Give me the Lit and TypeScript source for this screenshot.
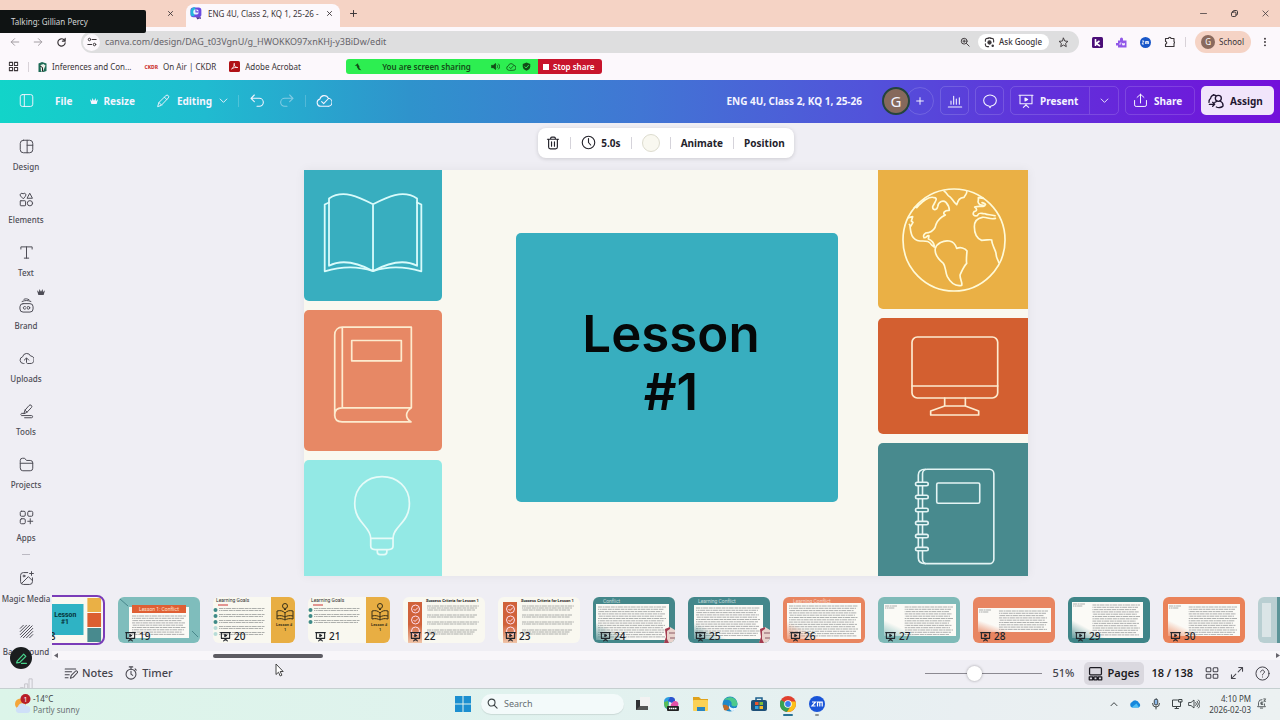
import { LitElement, html, svg, css } from "lit";
import { customElement } from "lit/decorators.js";

const icon = (size: number, body: unknown, weight = 1.6) => html`<svg
  width=${size} height=${size} viewBox="0 0 24 24" fill="none" stroke="currentColor"
  stroke-width=${weight} stroke-linecap="round" stroke-linejoin="round" aria-hidden="true"
>${body}</svg>`;

const g = {
  close: svg`<path d="M5 5l14 14M19 5L5 19"/>`,
  plus: svg`<path d="M12 4v16M4 12h16"/>`,
  minus: svg`<path d="M4 12h16"/>`,
  restore: svg`<rect x="4" y="8" width="12" height="12" rx="3"/><path d="M8 8V7a3 3 0 0 1 3-3h6a3 3 0 0 1 3 3v6a3 3 0 0 1-3 3h-1"/>`,
  back: svg`<path d="M21 12H3M11 4l-8 8 8 8"/>`,
  forward: svg`<path d="M3 12h18M13 4l8 8-8 8"/>`,
  reload: svg`<path d="M20 13a8 8 0 1 1-2.5-7L20 8.500M20 3v6h-6"/>`,
  tune: svg`<circle cx="6" cy="6" r="3"/><path d="M13 6h9M2 18h9"/><circle cx="18" cy="18" r="3"/>`,
  zoomIn: svg`<circle cx="10" cy="10" r="7"/><path d="M15.500 15.500L22 22M10 7v6M7 10h6"/>`,
  lens: svg`<path d="M3 9V7a4 4 0 0 1 4-4h2M15 3h2a4 4 0 0 1 4 4v4M3 15v2a4 4 0 0 0 4 4h3"/><circle cx="12" cy="12" r="3.500" fill="currentColor"/><circle cx="19" cy="19" r="1.500" fill="currentColor"/><path d="M9 3l1-1h4l1 1"/>`,
  star: svg`<path d="M12 2.500l2.900 6.300 6.800.7-5.100 4.600 1.500 6.900L12 17.500 5.900 21l1.500-6.900-5.100-4.600 6.800-.7z"/>`,
  puzzle: svg`<path d="M3 5h6a2.500 2.500 0 0 1 5 0h6v6a2.500 2.500 0 0 1 0 4v6H3v-5a2.500 2.500 0 0 0 0-5z"/>`,
  dots: svg`<g fill="currentColor" stroke="none"><circle cx="12" cy="4" r="2.300"/><circle cx="12" cy="12" r="2.300"/><circle cx="12" cy="20" r="2.300"/></g>`,
  apps4: svg`<rect x="3" y="3" width="7" height="7"/><rect x="14" y="3" width="7" height="7"/><rect x="3" y="14" width="7" height="7"/><rect x="14" y="14" width="7" height="7"/>`,
  panel: svg`<rect x="2" y="2.500" width="20" height="19" rx="3.500"/><path d="M8.500 2.500v19"/>`,
  crown: svg`<path fill="currentColor" stroke="none" d="M0 7L6 12L7 3L12 11L17 3L18 12L24 7L20 21H4Z"/>`,
  pencil: svg`<path d="M3 21l2-6.500L17 2.800a2.800 2.800 0 0 1 4 4L9.500 19zM14.500 5.500l4 4M5 14.500l4.500 4.500"/>`,
  chevron: svg`<path d="M3 8l9 9 9-9"/>`,
  chevronUp: svg`<path d="M3 17l9-9 9 9"/>`,
  undo: svg`<path d="M8 3L3 8l5 5M3 8h12.500a6 6 0 0 1 0 12H12"/>`,
  redo: svg`<path d="M16 3l5 5-5 5M21 8H8.500a6 6 0 0 0 0 12H12"/>`,
  cloudCheck: svg`<path d="M7 20a5.500 5.500 0 0 1-1.200-10.800A6.700 6.700 0 0 1 18.500 8 6 6 0 0 1 17.500 20zM8.500 13l3 3L18 9"/>`,
  chart: svg`<path d="M2 21h20M6 17v-5M10 17V5M14 17V9M18.500 17V7"/>`,
  comment: svg`<path d="M12 3c5.500 0 9.500 3.800 9.500 8.300S17.500 19.500 13.500 19.500L12 22l-1.500-2.500C6.500 19.500 2.500 15.800 2.500 11.300S6.500 3 12 3z"/>`,
  present: svg`<path d="M1.500 3.500h21M3 3.500v12.500h18V3.500M12 16v2M12 18l-4 3.500M12 18l4 3.500"/><path fill="currentColor" d="M10.500 7.500v4.500l4-2.200z"/>`,
  share: svg`<path d="M2.500 12v7a2.500 2.500 0 0 0 2.500 2.500h14a2.500 2.500 0 0 0 2.500-2.500v-7M12 16V2M6.500 7L12 2l5.500 5"/>`,
  assign: svg`<path d="M11 3.500A5 5 0 0 0 4 8a7 7 0 0 0-2.500 6M8 2.500L12 4M2 17h8M7 14l3 3-3 3"/><circle cx="15.500" cy="8" r="4.500"/><path d="M13 12c-1 2-2 2-3 2M18 12c3 1.500 5 4 4.500 7.500-2 2.500-7 3-10 1.500"/>`,
  trash: svg`<path d="M2.500 5.500h19M8 5.500V4a2 2 0 0 1 2-2h4a2 2 0 0 1 2 2v1.500M4.500 5.500V19a3 3 0 0 0 3 3h9a3 3 0 0 0 3-3V5.500M9.500 10v7.500M14.500 10v7.500"/>`,
  clock: svg`<circle cx="12" cy="12" r="10"/><path d="M12 5.500V12l3.500 4"/>`,
  design: svg`<rect x="2" y="2" width="20" height="20" rx="5"/><path d="M13 2v20M13 10h9"/>`,
  elements: svg`<path d="M6.500 10.500L2.500 6.500a2.400 2.400 0 0 1 4-3.500 2.400 2.400 0 0 1 4 3.500zM17.500 2.500l4 7.500h-8z"/><rect x="2" y="14" width="8.500" height="8" rx="1"/><circle cx="17.500" cy="18" r="4.200"/>`,
  text: svg`<path d="M3 6.500V3h18v3.500M12 3v18M8.500 21h7"/>`,
  brand: svg`<rect x="1.500" y="9" width="21" height="13.500" rx="5"/><path d="M5 5.500c5-2 9-2 14 0M8 2c3-1.300 5-.8 8 .8"/><path d="M10.500 14a2.200 2.200 0 1 0 0 3.500"/><circle cx="15" cy="15.700" r="2.200"/>`,
  upload: svg`<path d="M8 20H7A5.500 5.500 0 0 1 5.800 9.200 6.700 6.700 0 0 1 18.500 8 6 6 0 0 1 17.500 20H14c-1.500 0-2-1-2-2v-6M8.500 14.500L12 11l3.500 3.500"/>`,
  tools: svg`<path d="M8 15l1.500-5L16 2.500a2.500 2.500 0 0 1 4 3L13 13zM9.500 10l3.500 3"/><path d="M8 15H4a2 2 0 0 0 0 3.500h16a1.500 1.500 0 0 1 0 3.500H9"/>`,
  folder: svg`<path d="M2 8V5.500A3.500 3.500 0 0 1 5.500 2H9l3 3.500h6A4 4 0 0 1 22 9.500V18a4 4 0 0 1-4 4H6a4 4 0 0 1-4-4zM2 10h20"/>`,
  apps: svg`<rect x="2" y="2" width="8" height="8" rx="2"/><rect x="14" y="2" width="8" height="8" rx="2"/><rect x="2" y="14" width="8" height="8" rx="2"/><path d="M18 14v8M14 18h8"/>`,
  magic: svg`<path d="M14 2.500H7A4.500 4.500 0 0 0 2.500 7v10A4.500 4.500 0 0 0 7 21.500h10a4.500 4.500 0 0 0 4.500-4.500v-6M4 20L15 9l6 6M20 1v6M17 4h6"/><circle cx="8" cy="8" r="1.500"/>`,
  hatch: svg`<path d="M2 7l5-5M2 12L12 2M2 17L17 2M3 21L21 3M7 22L22 7M12 22l10-10M17 22l5-5"/>`,
  bars: svg`<path d="M2 22v-5h5v5M9 22V11h5v11M16 22V3h5v19"/>`,
  notes: svg`<path d="M2 5h18M2 10h11M2 15h7M2 20h5M11 21l1.500-5 7-7a2 2 0 0 1 3 3l-7 7.500z"/>`,
  timer: svg`<circle cx="12" cy="14" r="8.500"/><path d="M9 1.500h6M12 2v3.500M19 5l2 2M12 9v5l3 2"/>`,
  pages: svg`<rect x="2.500" y="2.500" width="19" height="11.500" rx="1.500"/><path d="M2 17.500h5.500V22H2zM9.500 17.500h5V22h-5zM16.500 17.500H22V22h-5.500z"/>`,
  grid: svg`<rect x="2" y="3" width="8" height="7" rx="1.500"/><rect x="14" y="3" width="8" height="7" rx="1.500"/><rect x="2" y="14" width="8" height="7" rx="1.500"/><rect x="14" y="14" width="8" height="7" rx="1.500"/>`,
  expand: svg`<path d="M15 2.500h6.500V9M21 3l-7 7M9 21.500H2.500V15M3 21l7-7"/>`,
  help: svg`<circle cx="12" cy="12" r="10.500"/><path d="M9 9.500a3 3 0 1 1 4.500 2.600c-1 .6-1.500 1.100-1.500 2.200M12 17.500v.2"/>`,
  mic: svg`<rect x="8.500" y="2" width="7" height="12" rx="3.500" fill="#8cb8e8"/><path d="M5 11a7 7 0 0 0 14 0M12 18v4"/>`,
  network: svg`<path d="M13 4H3v13h16v-5M8 21h7M11 17v4"/><path d="M16 3h6v5h-6zM19 8v3"/>`,
  speaker: svg`<path d="M2 9h4l6-5v16l-6-5H2zM15.500 9a4 4 0 0 1 0 6M18.500 6.500a8 8 0 0 1 0 11M21 4a11 11 0 0 1 0 16"/>`,
  loud: svg`<path fill="currentColor" d="M2 9h4l6-5v16l-6-5H2z"/><path d="M16 8a5 5 0 0 1 0 8M20 5a9 9 0 0 1 0 14"/>`,
  bell: svg`<path d="M13 3.500A7 7 0 0 0 5.500 10v6L3.500 19h17l-2-3v-3M9.500 22h5M15 9h-4v5h4M11 11.500h3M17 2h4l-4 5h4"/>`,
  search: svg`<circle cx="10" cy="10" r="7.500"/><path d="M15.500 15.500L22 22"/>`,
};

@customElement("browser-chrome")
class BrowserChrome extends LitElement {
  static styles = css`
    :host { display: block; position: relative; font: 8px/14px "Noto Sans", "Open Sans", sans-serif; color: #3a3538; background: #fcf8fc; }
    svg { display: block; flex: none; }
    button, a { font: inherit; color: inherit; background: none; border: 0; padding: 0; display: flex; align-items: center; text-decoration: none; white-space: nowrap; }
    .tabs { height: 27px; background: #f5d3c5; display: flex; align-items: flex-end; padding: 0 10px 0 0; box-sizing: border-box; }
    .tab { height: 27px; display: flex; align-items: center; box-sizing: border-box; padding: 0 6px 0 10px; gap: 5px; }
    .idle { width: 180px; justify-content: flex-end; }
    .active { height: 23px; width: 154px; margin-left: 6px; padding: 0 7px 4px 4px; background: #fcf8fc; border-radius: 8px 8px 0 0; }
    .title { flex: 1; overflow: hidden; white-space: nowrap; }
    .new { height: 27px; margin-left: 9px; }
    .window { margin-left: auto; display: flex; gap: 22px; height: 27px; align-items: center; }
    .bar { height: 30px; display: flex; align-items: center; padding: 0 10px; }
    .nav { display: flex; gap: 13px; width: 71px; flex: none; align-items: center; }
    .muted { color: #9b969b; }
    .omni { flex: 1; height: 22px; border-radius: 11px; background: #dededf; display: flex; align-items: center; gap: 5px; padding: 0 10px 0 2px; }
    .site { width: 17px; height: 17px; border-radius: 50%; background: #fcf8fc; justify-content: center; }
    .url { flex: 1; min-width: 0; border: 0; background: none; padding: 0; font: 9px/14px "Noto Sans", sans-serif; color: #66646a; outline: 0; }
    .ask { height: 16px; padding: 0 7px 0 6px; gap: 4px; border-radius: 8px; background: #fff; font-weight: 500; margin: 0 4px 0 3px; }
    .ext { display: flex; align-items: center; gap: 13px; padding-left: 13px; }
    .ext .rule { margin: 0 -4px; }
    .school { height: 22px; border-radius: 11px; background: #f5d3c5; padding: 0 7px 0 6px; gap: 4px; margin-right: -4px; }
    .g { width: 14px; height: 14px; border-radius: 50%; background: #8a6a5e; color: #fff; text-align: center; }
    .marks { height: 23px; display: flex; align-items: center; padding: 0 8px 4px; gap: 13px; box-sizing: border-box; }
    .marks .rule { margin: 0 -4px; }
    .marks a { gap: 5px; }
    .rule { width: 1px; height: 10px; background: #d8d2d8; }
    .ckdr { font-size: 5px; font-weight: 800; color: #c33; }
    .talking { position: absolute; left: 0; top: 10px; width: 146px; height: 23px; line-height: 23px; padding-left: 11px; box-sizing: border-box; background: #0f1313; color: #d4d6d6; border-radius: 0 2px 2px 0; }
    .sharing { position: absolute; left: 346px; top: 59px; display: flex; height: 15px; font-weight: 600; }
    .on { width: 192px; box-sizing: border-box; background: #2dee51; color: #124d17; border-radius: 3px 0 0 3px; display: flex; align-items: center; justify-content: space-between; padding: 0 7px 0 8px; }
    .on span { display: flex; gap: 6px; }
    .stop { width: 64px; gap: 4px; padding: 0 5px; background: #c8142c; color: #fff; border-radius: 0 3px 3px 0; }
    .sq { width: 6px; height: 6px; background: #fff; }
  `;
  render() {
    return html`
      <div class="tabs">
        <div class="tab idle"><button aria-label="Close tab">${icon(7, g.close, 3)}</button></div>
        <div class="tab active">
          <svg width="13" height="13" viewBox="0 0 24 24"><rect x="1" y="1" width="20" height="18" rx="5" fill="#6a4be0"/><path d="M1 8a7 7 0 0 1 9-7L8 17H5a4 4 0 0 1-4-4z" fill="#24b5dc"/><path d="M11 19h9v3l-3-1-3 2z" fill="#4a2a90"/><circle cx="11" cy="9" r="5" fill="#eaf4ff"/><path d="M11 4v5h5" fill="none" stroke="#6a4be0" stroke-width="2"/></svg>
          <span class="title">ENG 4U, Class 2, KQ 1, 25-26 -</span>
          <button aria-label="Close tab">${icon(7, g.close, 3)}</button>
        </div>
        <button class="new" aria-label="New tab">${icon(9, g.plus, 2.6)}</button>
        <div class="window">
          <button aria-label="Minimise">${icon(9, g.minus, 2)}</button>
          <button aria-label="Restore">${icon(9, g.restore, 2.6)}</button>
          <button aria-label="Close">${icon(9, g.close, 2)}</button>
        </div>
      </div>
      <div class="bar">
        <div class="nav">
          <button class="muted" aria-label="Back">${icon(10, g.back, 2.2)}</button>
          <button class="muted" aria-label="Forward">${icon(10, g.forward, 2.2)}</button>
          <button aria-label="Reload">${icon(11, g.reload, 2.6)}</button>
        </div>
        <div class="omni">
          <button class="site" aria-label="Site information">${icon(10, g.tune, 2.4)}</button>
          <input class="url" aria-label="Address" value="canva.com/design/DAG_t03VgnU/g_HWOKKO97xnKHj-y3BiDw/edit" />
          <button aria-label="Zoom">${icon(10, g.zoomIn, 2.2)}</button>
          <button class="ask">${icon(11, g.lens, 2.4)}Ask Google</button>
          <button aria-label="Bookmark">${icon(11, g.star, 2)}</button>
        </div>
        <div class="ext">
          <svg width="11" height="11" viewBox="0 0 22 22"><rect width="22" height="22" rx="3" fill="#4b0e78"/><path d="M7 4v14M15 8l-7 5 8 5" stroke="#fff" stroke-width="3.200" fill="none"/></svg>
          <svg width="11" height="11" viewBox="0 0 22 22"><path d="M8 7V4a3 3 0 0 1 6 0v3h7v14H4v-4H0v-5h4V7z" fill="#9158e8"/><path d="M8 16v-4h3M13 12v4h2v-3v3h2v-4" stroke="#fff" stroke-width="1.500" fill="none"/></svg>
          <svg width="11" height="11" viewBox="0 0 22 22"><circle cx="11" cy="11" r="11" fill="#1957c8"/><path d="M4 8h4l-4 6h4M11 14V9h3v5v-5h3v5" stroke="#fff" stroke-width="1.600" fill="none"/></svg>
          <button aria-label="Extensions">${icon(12, g.puzzle, 2.2)}</button>
          <span class="rule"></span>
          <button class="school"><span class="g">G</span>School</button>
          <button aria-label="Menu">${icon(10, g.dots)}</button>
        </div>
      </div>
      <div class="marks">
        <button aria-label="Apps">${icon(11, g.apps4, 2.2)}</button>
        <span class="rule"></span>
        <a href="#"><svg width="9" height="10" viewBox="0 0 18 20"><path d="M1 3l7-3 9 3v15l-6 2H1z" fill="#1d6b56"/><path d="M5 6l6-2 4 3-5 12H6z" fill="#e8f0e8"/><path d="M4 8l5 3v8" stroke="#222" stroke-width="2" fill="none"/></svg>Inferences and Con...</a>
        <a href="#"><span class="ckdr">CKDR</span>On Air | CKDR</a>
        <a href="#"><svg width="11" height="11" viewBox="0 0 22 22"><rect width="22" height="22" rx="3" fill="#b01116"/><path d="M5 16c4-2 6-8 5.500-11.500C9 9 13 14 17.500 13 13 12 8 14 5 16z" stroke="#fff" stroke-width="1.600" fill="none"/></svg>Adobe Acrobat</a>
      </div>
      <div class="sharing">
        <div class="on">
          <svg width="8" height="8" viewBox="0 0 24 24"><path d="M2 8l10-7 1 5 3 3v6l6 7-8-2-5-7-1-5z" fill="#124d17"/></svg>
          You are screen sharing
          <span>${icon(9, g.loud, 2.2)}${icon(10, g.cloudCheck, 2)}<svg width="9" height="9" viewBox="0 0 24 24"><path d="M12 1l10 4v7c0 6-5 9-10 11C7 21 2 18 2 12V5z" fill="#124d17"/><path d="M7 12l4 4 7-8" stroke="#2dee51" stroke-width="2.500" fill="none"/></svg></span>
        </div>
        <button class="stop"><span class="sq"></span>Stop share</button>
      </div>
      <div class="talking">Talking: Gillian Percy</div>
    `;
  }
}

@customElement("editor-header")
class EditorHeader extends LitElement {
  static styles = css`
    :host { display: flex; align-items: center; height: 43px; padding: 0 6px 2px 19px; box-sizing: border-box; color: #f4f4ff; font: 700 10px/16px "Noto Sans", sans-serif;
      background: linear-gradient(90deg, #12d4c9 0%, #20bbd0 16%, #2f93cc 32%, #4176d4 50%, #5252da 68%, #5f34da 80%, #7310da 100%); }
    svg { display: block; flex: none; }
    button { font: inherit; color: inherit; background: none; border: 0; padding: 0; display: flex; align-items: center; white-space: nowrap; }
    .file { margin-left: 21px; }
    .resize { margin-left: 18px; gap: 5px; }
    .mode { margin-left: 21px; gap: 7px; }
    .rule { width: 1px; height: 12px; background: #ffffff33; margin: 0 10px; }
    .undo { margin-right: 14px; }
    .off { opacity: .45; }
    .name { margin-left: auto; }
    .people { display: flex; margin-left: 20px; }
    .me { width: 28px; height: 28px; line-height: 24px; box-sizing: border-box; border: 2px solid #24443c; border-radius: 50%; background: #86695c; text-align: center; font-size: 15px; font-weight: 400; z-index: 1; }
    .add, .square, .box { border: 1px solid #ffffff26; box-sizing: border-box; }
    .add { width: 28px; height: 28px; border-radius: 50%; margin-left: -4px; justify-content: center; }
    .actions { display: flex; gap: 6px; margin-left: 6px; }
    .square { width: 29px; height: 29px; border-radius: 5px; justify-content: center; }
    .box { height: 29px; border-radius: 5px; display: flex; }
    .box button { gap: 6px; box-sizing: border-box; }
    .present { width: 78px; padding-left: 7px; }
    .more { width: 29px; justify-content: center; border-left: 1px solid #ffffff26; }
    .share { width: 68px; padding-left: 7px; }
    .assign { height: 29px; width: 73px; padding-left: 7px; gap: 6px; border-radius: 5px; background: #f1e5fb; color: #1f1630; }
  `;
  render() {
    return html`
      <button aria-label="Toggle panel">${icon(15, g.panel, 1.5)}</button>
      <button class="file">File</button>
      <button class="resize">${icon(8, g.crown)}Resize</button>
      <button class="mode">${icon(14, g.pencil)}Editing ${icon(9, g.chevron, 2.4)}</button>
      <span class="rule"></span>
      <button class="undo" aria-label="Undo">${icon(16, g.undo)}</button>
      <button class="off" aria-label="Redo">${icon(16, g.redo)}</button>
      <span class="rule"></span>
      <button aria-label="Saved">${icon(16, g.cloudCheck)}</button>
      <span class="name">ENG 4U, Class 2, KQ 1, 25-26</span>
      <div class="people"><span class="me">G</span><button class="add" aria-label="Invite">${icon(10, g.plus, 2.4)}</button></div>
      <div class="actions">
        <button class="square" aria-label="Insights">${icon(16, g.chart)}</button>
        <button class="square" aria-label="Comments">${icon(16, g.comment)}</button>
        <div class="box"><button class="present">${icon(16, g.present)}Present</button><button class="more" aria-label="More">${icon(9, g.chevron, 2.4)}</button></div>
        <div class="box"><button class="share">${icon(15, g.share)}Share</button></div>
        <button class="assign">${icon(16, g.assign, 2)}Assign</button>
      </div>
    `;
  }
}

@customElement("side-rail")
class SideRail extends LitElement {
  static styles = css`
    :host { display: block; width: 52px; overflow: hidden; padding-top: 16px; box-sizing: border-box; font: 500 8px/12px "Noto Sans", sans-serif; color: #4e4d56; }
    svg { display: block; }
    .item { position: relative; width: 52px; height: 53px; padding: 0; border: 0; background: none; font: inherit; color: inherit; display: flex; flex-direction: column; align-items: center; gap: 7px; white-space: nowrap; }
    .crown { position: absolute; left: 37px; top: -10px; }
    .rule { width: 8px; height: 1px; margin: -9px auto 16px; background: #bbb9c2; }
    .faded { opacity: .25; }
  `;
  render() {
    const item = (label: string, glyph: unknown, extra: unknown = "") =>
      html`<button class="item">${icon(15, glyph)}<span>${label}</span>${extra}</button>`;
    return html`
      ${item("Design", g.design)}${item("Elements", g.elements)}${item("Text", g.text)}
      ${item("Brand", g.brand, html`<span class="crown">${icon(8, g.crown)}</span>`)}
      ${item("Uploads", g.upload)}${item("Tools", g.tools)}${item("Projects", g.folder)}${item("Apps", g.apps)}
      <div class="rule"></div>
      ${item("Magic Media", g.magic)}${item("Background", g.hatch)}
      <div class="faded">${item("", g.bars)}</div>
    `;
  }
}

@customElement("lesson-slide")
class LessonSlide extends LitElement {
  static styles = css`
    :host { display: grid; grid-template-columns: 138fr 435fr 150fr; aspect-ratio: 723 / 406; background: #f9f8f0; box-shadow: 0 0 10px #0000000f; overflow: hidden; }
    .col { display: flex; flex-direction: column; gap: 9px; min-height: 0; }
    .tile { flex: 1 1 0; min-height: 0; border-radius: 5px; }
    .tile svg { display: block; width: 100%; height: 100%; }
    .col .tile:first-child { border-top-left-radius: 0; border-top-right-radius: 0; }
    .col .tile:last-child { border-bottom-left-radius: 0; border-bottom-right-radius: 0; }
    .right .tile { border-top-right-radius: 0; border-bottom-right-radius: 0; }
    .teal { background: #38aebf; flex-grow: 131; }
    .salmon { background: #e78865; flex-grow: 141; }
    .aqua { background: #93e9e5; flex-grow: 116; }
    .gold { background: #eab045; flex-grow: 139; }
    .rust { background: #d35f30; flex-grow: 116; }
    .pine { background: #488a8e; flex-grow: 133; }
    .middle { display: flex; padding: 63px 40px 74px 74px; }
    .card { flex: 1; border-radius: 5px; background: #38aebf; display: flex; align-items: center; justify-content: center; text-align: center; margin: 0; padding: 0 12px 10px 0; font: 600 51px/58px Inter, sans-serif; color: #050808; }
  `;
  render() {
    const art = (w: number, h: number, body: unknown, color: string) => html`<svg viewBox="0 0 ${w} ${h}" fill="none" stroke=${color} stroke-linejoin="round" stroke-linecap="round" aria-hidden="true">${body}</svg>`;
    return html`
      <div class="col">
        <div class="tile teal">${art(138, 131, svg`<g stroke-width="1.800"><path d="M69 34.300C55 27 39 19 25 28.500V95.700C40 88 56 94 69 101C82 94 98 88 113 95.700V28.500C99 19 83 27 69 34.300ZM69 34.300V101"/><path d="M25 32.500L20.700 34.500V101.300C38 96 54 96 69 101C84 96 100 96 117.300 101.300V34.500L113 32.500"/></g>`, "#d9fbfb")}</div>
        <div class="tile salmon">${art(138, 141, svg`<g stroke-width="1.700"><path d="M30.700 106V25C30.700 20 34 17.200 38.300 17.200H107.300V97.800H38C33 97.800 30.700 101 30.700 105C30.700 109 33 111.800 38 111.800H107C101 108 101 102 107.300 97.800M38.300 17.200V97.800"/><rect x="47.700" y="30.500" width="49.600" height="20.300"/></g>`, "#fdebcf")}</div>
        <div class="tile aqua">${art(138, 116, svg`<g stroke-width="1.700"><path d="M66.700 78.300C66.700 66 50.700 63 50.700 43.300C50.700 27 63 16.700 78 16.700C93 16.700 105.400 27 105.400 43.300C105.400 63 89 66 89 78.300ZM66.700 78.300V86Q66.700 89.500 71 89.500H84.500Q89 89.500 89 86V78.300M73.300 89.500V92Q73.300 94.500 76 94.500H80Q82.800 94.500 82.800 92V89.500"/></g>`, "#e6fbf8")}</div>
      </div>
      <div class="middle"><h1 class="card">Lesson<br />#1</h1></div>
      <div class="col right">
        <div class="tile gold">${art(150, 139, svg`<g transform="translate(-98 -5) scale(.3333)" stroke-width="5">
          <circle cx="522" cy="225" r="153"/>
          <path d="M386 158L398 155L394 168L399 172L392 184L388 178M390 182C392 205 395 225 420 228C440 228 446 226 455 240L463 246M403 128C415 122 425 115 432 104M410 128C425 108 450 92 463 98C475 100 465 110 458 125C457 135 470 138 473 125C475 108 490 105 498 112C505 120 508 130 508 136C495 135 485 145 496 150C485 155 475 160 468 178C465 195 455 200 445 203C432 203 428 212 432 218C440 220 440 210 447 212L445 222C455 225 462 235 463 242"/>
          <path d="M466 250C470 235 490 225 508 228C520 230 527 240 530 250C540 246 555 248 561 258C560 270 558 285 560 295C550 305 545 320 540 330C540 345 548 352 545 361C525 365 510 350 502 335C495 320 498 305 490 295C478 285 462 270 466 250Z"/>
          <path d="M492 78C500 82 502 90 505 92C515 95 518 110 530 119C535 105 538 98 552 97C555 90 562 85 560 80M610 100L595 98V106C592 112 598 120 605 120C618 125 622 116 606 113M614 122C606 127 598 122 584 126C592 132 592 138 582 140C576 148 582 154 592 152C598 138 605 148 615 146C622 150 632 148 645 152M646 160C630 165 620 155 607 157C590 160 583 170 583 185C583 205 590 220 605 226C620 226 630 222 635 225C635 240 645 250 648 265C648 280 655 285 656 292"/></g>`, "#fffad8")}</div>
        <div class="tile rust">${art(150, 116, svg`<g transform="translate(-98 -153) scale(.3333)" stroke-width="5"><rect x="396" y="516" width="257" height="183" rx="16"/><path d="M396 663H653M494 699V723M556 699V723M494 723L452 738V750H596V738L556 723Z"/></g>`, "#fdebcf")}</div>
        <div class="tile pine">${art(150, 133, svg`<g stroke-width="1.600"><rect x="44.500" y="26.300" width="71.300" height="94.300" rx="4.500"/><path d="M47.500 26.300C43 26.300 40.300 28 40.300 32V115C40.300 119 43 120.600 47.500 120.600"/><rect x="58.700" y="40" width="43" height="20.300" rx="1.500"/><g fill="#488a8e">${[41, 54, 67, 80, 93, 106].map((y) => svg`<rect x="37.500" y=${y - 1.7} width="12.700" height="3.400" rx="1.700"/>`)}</g></g>`, "#e4f4f4")}</div>
      </div>
    `;
  }
}

@customElement("page-strip")
class PageStrip extends LitElement {
  static styles = css`
    :host { display: block; }
    .view { overflow: hidden; }
    .track { display: flex; gap: 13px; margin-left: -29px; padding: 5px 0 8px; width: max-content; }
    .page { position: relative; width: 82px; height: 46px; padding: 0; border: 0; border-radius: 6px; background: #f9f8f0; overflow: hidden; flex: none; }
    .page.current { width: 80px; margin-right: 2px; outline: 2px solid #7a3cb8; background: #fff; }
    .art { display: block; width: 100%; height: 100%; }
    .tag { position: absolute; left: 7px; bottom: 0; display: flex; align-items: center; gap: 3px; font: 500 10px/14px "Noto Sans", sans-serif; color: #20242a; }
    .tag svg { display: block; }
    .scroll { height: 9px; background: #f8f6fa; display: flex; align-items: center; justify-content: space-between; padding: 0 0 0 2px; }
    .thumb { width: 9%; height: 4px; border-radius: 2px; background: #5d5b62; margin-left: 155px; margin-right: auto; }
  `;
  lines(x: number, y: number, w: number, n: number, step = 2.4) {
    return svg`<g stroke="#5b5f63" stroke-width=".8" opacity=".6">${Array.from({ length: n }, (_, i) => svg`<path stroke-dasharray="4 .6 2 .5 5 .7" stroke-dashoffset=${i * 3} d="M${x} ${y + i * step}h${w - (i * 7) % 5}"/>`)}</g>`;
  }
  title(x: number, y: number, text: string, color: string, weight = 400, size = 5) {
    return svg`<text x=${x} y=${y} font-size=${size} font-weight=${weight} font-family="Roboto, sans-serif" fill=${color}>${text}</text>`;
  }
  goals(n: number) {
    return svg`${this.title(3, 4.5, "Learning Goals", "#333", 400, 5)}
      <path d="M5 8h10" stroke="#c33" stroke-width="1"/>
      ${Array.from({ length: n }, (_, i) => svg`<circle cx="2.500" cy=${13 + i * 6} r="2" fill=${i > 2 ? "#b8dcd8" : "#3f8a88"}/>${this.lines(6, 11.500 + i * 6, 46, 2, 2)}`)}
      <rect x="58" width="24" height="46" fill="#e8ae43"/>
      <g stroke="#3a3018" stroke-width="1" fill="none"><path d="M64 14c4-1 6 0 8 2 2-2 4-3 8-2v8c-4-1-6 0-8 1-2-1-4-2-8-1zM72 16v7M64 19c4-1 6 0 8 1 2-1 4-2 8-1"/><circle cx="72" cy="9" r="2.500"/><path d="M71 12.500h2"/></g>
      ${this.title(63, 29, "Lesson #", "#3a3018", 700, 4)}${this.title(71, 34, "1", "#3a3018", 700, 4)}`;
  }
  criteria() {
    return svg`<defs><linearGradient id="f" x2="0" y2="1"><stop offset=".55" stop-color="#d0623a"/><stop offset="1" stop-color="#f0c4a8"/></linearGradient></defs>
      <rect x="5" y="5" width="14" height="41" fill="url(#f)"/>
      <g stroke="#fde" stroke-width="1" fill="none"><circle cx="12.500" cy="12" r="4"/><path d="M10.500 12l1.500 1.500 3-3"/><circle cx="12.500" cy="23" r="4"/><path d="M10.500 23l1.500 1.500 3-3"/><circle cx="12.500" cy="34" r="4"/></g>
      ${this.title(23, 5, "Success Criteria for Lesson 1", "#222", 700, 4)}
      ${this.lines(24, 9, 52, 3, 2)}${this.lines(24, 18, 50, 2, 2)}${this.lines(24, 25, 52, 2, 2)}${this.lines(24, 33, 50, 3, 2)}`;
  }
  doc(bg: string, x: number, y: number, w: number, h: number, title = "", split = false, books = false) {
    const cut = split ? w * 0.26 : 0;
    const id = "s" + bg.slice(1);
    return svg`<defs><linearGradient id=${id} x1="0" y1="1" x2=".7" y2=".2"><stop stop-color=${bg} stop-opacity=".8"/><stop offset=".6" stop-color=${bg} stop-opacity="0"/></linearGradient></defs>
      <rect width="82" height="46" fill=${bg}/>${this.title(10, 5.500, title, "#ffffffaa")}
      <rect x=${x} y=${y} width=${w} height=${h} fill="#fbfaf6"/>
      ${this.lines(x + 2 + cut, y + 3, w - 5 - cut, Math.floor((h - 2) / 2.3), 2.3)}
      ${split ? this.lines(x + 1, y + 2, 12, 2, 2) : ""}
      <rect x=${x} y=${y + h * 0.4} width=${w * 0.5} height=${h * 0.6} fill="url(#${id})"/>
      ${books ? svg`<path d="M72 32l5-2 5 3v13H71l2-6z" fill="#e9d3cd"/><path d="M72 32l5-2v2l-3 2v8l2 4h-5l2-6z" fill="#a33c50"/><path d="M76 36h6M77 41h5" stroke="#8b5a66" stroke-width="1"/>` : ""}`;
  }
  render() {
    const pages: unknown[] = [
      svg`<rect width="82" height="46" rx="3" fill="#f9f8f0"/><rect x="26" y="7" width="36" height="31" fill="#2fb3c4"/>${this.title(32, 20, "Lesson", "#063238", 700, 7)}${this.title(39, 27, "#1", "#063238", 700, 7)}<rect x="66" y="1" width="14" height="14" fill="#eab045"/><rect x="66" y="16" width="14" height="14" fill="#dc5f30"/><rect x="66" y="31" width="14" height="14" fill="#488a8e"/>`,
      svg`<rect width="82" height="46" fill="#7fbdbc"/><rect x="11" y="10" width="60" height="31" fill="#fbfaf6"/><rect x="14" y="8" width="54" height="8" fill="#df5f34"/>${this.title(21, 14, "Lesson 1: Conflict", "#ffe3d0", 400, 5)}${this.lines(14, 19, 54, 9, 2.3)}<path d="M2 2l8 7M80 40l-6-6" stroke="#3b7a80" stroke-width=".8"/>`,
      this.goals(5), this.goals(3), this.criteria(), this.criteria(),
      this.doc("#44878a", 3, 7, 73, 36, "   Conflict", false, true),
      this.doc("#44878b", 6, 8, 69, 34, "Learning Conflict", false, true),
      this.doc("#e88560", 4, 6, 74, 36, "Learning Conflict"),
      this.doc("#7fbab8", 6, 7, 72, 32, "", true),
      this.doc("#e88561", 5, 11, 73, 24, "", true),
      this.doc("#3f8588", 4, 5, 71, 36, "", true),
      this.doc("#ea8259", 5, 7, 72, 32, "", true),
      svg`<rect width="82" height="46" fill="#b9cfd2"/><rect x="4" y="6" width="9" height="34" fill="#dbe5e7"/><rect x="19" width="63" height="46" fill="#5b9498"/>`,
    ];
    return html`
      <div class="view"><div class="track">
        ${pages.map((art, i) => html`<button class="page ${i ? "" : "current"}"><svg class="art" viewBox="0 0 82 46" preserveAspectRatio="none">${art}</svg>${i < 13 ? html`<span class="tag">${icon(11, g.present, 2.4)}${18 + i}</span>` : ""}</button>`)}
      </div></div>
      <div class="scroll">
        <svg width="4" height="5" viewBox="0 0 4 5"><path d="M4 0v5L0 2.500z" fill="#66646c"/></svg>
        <span class="thumb"></span>
        <svg width="4" height="5" viewBox="0 0 4 5"><path d="M0 0v5l4-2.500z" fill="#66646c"/></svg>
      </div>
    `;
  }
}

@customElement("editor-footer")
class EditorFooter extends LitElement {
  static styles = css`
    :host { display: flex; align-items: center; height: 28px; box-sizing: border-box; padding: 0 10px 2px 12px; font: 500 11px/16px "Noto Sans", sans-serif; color: #45444c; }
    svg { display: block; }
    button { font: inherit; color: inherit; background: none; border: 0; padding: 0; display: flex; align-items: center; gap: 4px; }
    .timer { margin-left: 11px; }
    .zoom { appearance: none; width: 117px; height: 16px; margin: 0 11px 0 auto; background: linear-gradient(#8b8991, #8b8991) center / 100% 1px no-repeat; }
    .zoom::-webkit-slider-thumb { appearance: none; width: 15px; height: 15px; border-radius: 50%; background: #fff; box-shadow: 0 0 3px #00000059; }
    .pages { height: 23px; padding: 0 5px 0 4px; margin: 0 7px 0 10px; border-radius: 5px; background: #dad8df; font-weight: 600; color: #1c1b22; }
    .count { font-weight: 600; color: #1c1b22; margin-right: 12px; }
    .tools { display: flex; gap: 11px; }
  `;
  render() {
    return html`
      <button>${icon(14, g.notes, 1.8)}Notes</button>
      <button class="timer">${icon(14, g.timer, 1.8)}Timer</button>
      <input class="zoom" type="range" aria-label="Zoom" min="0" max="100" value="42" />
      <span>51%</span>
      <button class="pages">${icon(15, g.pages, 2)}Pages</button>
      <span class="count">18 / 138</span>
      <div class="tools">
        <button aria-label="Grid view">${icon(14, g.grid, 1.8)}</button>
        <button aria-label="Full screen">${icon(14, g.expand, 1.8)}</button>
        <button aria-label="Help">${icon(15, g.help, 1.6)}</button>
      </div>
    `;
  }
}

@customElement("desktop-taskbar")
class DesktopTaskbar extends LitElement {
  static styles = css`
    :host { display: grid; grid-template-columns: 1fr auto 1fr; align-items: center; height: 32px; padding-bottom: 2px; box-sizing: border-box; border-top: 1px solid #c5cfd0; background: linear-gradient(90deg, #dcf5e9, #e0f2ee 40%, #e9eff2 75%, #ecf1f2); font: 8px/11px "Noto Sans", sans-serif; color: #3b4244; }
    svg { display: block; }
    button { font: inherit; color: inherit; background: none; border: 0; padding: 0; text-align: left; }
    .weather { display: flex; align-items: center; gap: 1px; padding-left: 13px; }
    .sub { color: #6a7274; }
    .center { display: flex; align-items: center; gap: 13px; }
    .search { display: flex; align-items: center; gap: 6px; width: 143px; height: 20px; margin: 0 -3px; padding: 0 6px; box-sizing: border-box; border-radius: 10px; background: #f3fafa; box-shadow: 0 1px 1px #0000001a; color: #3b4244; }
    .search input { flex: 1; min-width: 0; border: 0; background: none; padding: 0; font: 9px/14px "Noto Sans", sans-serif; outline: 0; }
    .search input::placeholder { color: #666e72; opacity: 1; }
    .run { display: grid; justify-items: center; gap: 2px; padding-top: 4px; }
    .run i { width: 10px; height: 2px; border-radius: 1px; background: #2a7394; }
    .run .small { width: 4px; background: #8c9496; }
    .tray { display: flex; align-items: center; justify-content: flex-end; gap: 5px; padding-right: 13px; }
    .up { margin-right: 6px; }
    .gap { margin: 0 4px; }
    .clock { text-align: right; margin-left: 4px; }
  `;
  render() {
    return html`
      <button class="weather">
        <svg width="19" height="20" viewBox="0 0 38 40"><circle cx="15" cy="20" r="11" fill="#f4a63a"/><path d="M10 38a7 7 0 0 1 0-13 9 9 0 0 1 17-1 7 7 0 0 1 1 14z" fill="#cfe0f8"/><circle cx="25" cy="10" r="10" fill="#b81e28"/><text x="21" y="15" font-size="14" font-family="Noto Sans, sans-serif" fill="#fff">1</text></svg>
        <span>-14°C<br /><span class="sub">Partly sunny</span></span>
      </button>
      <div class="center">
        <svg width="16" height="16" viewBox="0 0 16 16"><path d="M0 0h7.500v7.500H0zM8.500 0H16v7.500H8.500zM0 8.500h7.500V16H0zM8.500 8.500H16V16H8.500z" fill="#1c8fd0"/></svg>
        <label class="search">${icon(11, g.search, 2.4)}<input placeholder="Search" aria-label="Search" /></label>
        <svg width="16" height="16" viewBox="0 0 16 16"><rect x="6" y="1" width="10" height="10" fill="#f2f2f2"/><path d="M2 4h4v6h7v4H2z" fill="#2f3133"/><path d="M6 10h8v4H2z" fill="#555"/></svg>
        <svg width="16" height="16" viewBox="0 0 16 16"><path d="M1 6c0-4 3-5 6-5L5 13c-3 0-4-2-4-7z" fill="#2d9fe0"/><path d="M7 1c5 0 5 2 5 4L9 7 5 5z" fill="#2b55d0"/><path d="M11 5c4 0 5 2 4 5-1 3-3 4-8 4l1-6z" fill="#e552a8"/><path d="M1 6l4-1 1 8c-3 0-5-2-5-7z" fill="#58bd55"/><rect x="4" y="10" width="12" height="5" rx="1" fill="#222"/><path d="M6 12.500h8" stroke="#fff" stroke-width="1.500" stroke-dasharray="1.500 .5"/></svg>
        <svg width="17" height="16" viewBox="0 0 17 16"><path d="M1 1h6l2 2h7v5H1z" fill="#e0a21c"/><rect x="1" y="4" width="15" height="11" rx="1" fill="#fbd155"/><path d="M5 11h8v4H5z" fill="#2a86c0"/></svg>
        <svg width="16" height="16" viewBox="0 0 16 16"><circle cx="8" cy="8" r="7.500" fill="#1e88c8"/><path d="M2 4c4-5 13-3 13.500 4 0 3-5 3-6 1 1-5-4-6-7.500-5z" fill="#4cc98c"/><path d="M8 7c-2 2 0 6 5 5 2 0 3-1 2 0-1 2-3 3-5 3-3-1-4-5-2-8z" fill="#e6f5ff"/><path d="M1 9c3-1 6 1 6 3s-3 3-5 2z" fill="#c06a2a"/></svg>
        <svg width="16" height="16" viewBox="0 0 16 16"><path d="M5 4V2h6v2" stroke="#1d5f8c" fill="none" stroke-width="1.500"/><rect x="0" y="4" width="16" height="11" rx="2" fill="#1e5078"/><path d="M4 6h3.500v3H4z" fill="#e8562f"/><path d="M8.500 6H12v3H8.500z" fill="#7dbb3b"/><path d="M4 10h3.500v3H4z" fill="#2ea3e3"/><path d="M8.500 10H12v3H8.500z" fill="#f6b927"/></svg>
        <span class="run"><svg width="16" height="16" viewBox="0 0 16 16"><circle cx="8" cy="8" r="8" fill="#e0402f"/><path d="M8 8L1 4a8 8 0 0 0 6 12l3.500-6z" fill="#35a253"/><path d="M8 8l3 2-4 6a8 8 0 0 0 8.500-10.500H8z" fill="#fbc11a"/><circle cx="8" cy="8" r="3.800" fill="#fff"/><circle cx="8" cy="8" r="2.900" fill="#3b7ded"/></svg><i></i></span>
        <span class="run"><svg width="16" height="16" viewBox="0 0 16 16"><circle cx="8" cy="8" r="8" fill="#1a55d8"/><path d="M3 6h3.500L3 10h3.500M8.500 10.500V6.200h2.300v4.300V6.200h2.400v4.300" stroke="#fff" stroke-width="1.200" fill="none"/></svg><i class="small"></i></span>
      </div>
      <div class="tray">
        <button class="up" aria-label="Hidden icons">${icon(8, g.chevronUp, 3)}</button>
        <svg width="12" height="9" viewBox="0 0 24 18"><path d="M6 17a6 6 0 0 1 0-11 8 8 0 0 1 14 2 5 5 0 0 1-1 9z" fill="#1787dc"/><path d="M5 17l10-8 5 8z" fill="#4fc0f5"/></svg>
        <span class="gap">${icon(12, g.mic, 2)}</span>
        ${icon(12, g.network, 2)}${icon(12, g.speaker, 1.8)}
        <span class="clock">4:10 PM<br />2026-02-03</span>
        ${icon(11, g.bell, 1.8)}
      </div>
    `;
  }
}

@customElement("app-root")
class AppRoot extends LitElement {
  static styles = css`
    :host { display: flex; flex-direction: column; height: 100vh; overflow: hidden; position: relative; background: #efeef4; }
    .editor { flex: 1; min-height: 0; display: grid; grid-template-columns: 52px minmax(0, 1fr); }
    .main { min-width: 0; min-height: 0; display: flex; flex-direction: column; }
    .stage { flex: 1; min-height: 0; display: flex; flex-direction: column; align-items: center; gap: 12px; padding-top: 5px; }
    .context { display: flex; align-items: center; height: 30px; box-sizing: border-box; padding: 0 9px 1px 8px; background: #fff; border-radius: 8px; box-shadow: 0 1px 4px #00000026; font: 700 10px/16px "Noto Sans", sans-serif; color: #24232b; }
    .context svg { display: block; }
    .context button { display: flex; align-items: center; gap: 5px; padding: 0; border: 0; background: none; font: inherit; color: inherit; }
    .rule { width: 1px; height: 12px; margin: 0 10px; background: #d5d3da; }
    .context .color { width: 18px; height: 18px; border-radius: 50%; border: 1px solid #dddccf; background: #f9f8f0; }
    .slide { width: 58.9%; }
    .pen { position: absolute; left: 10px; bottom: 51px; width: 22px; height: 22px; border: 0; padding: 0; border-radius: 50%; background: #1a1d1e; color: #48d58c; display: grid; place-items: center; }
    .cursor { position: absolute; left: 275px; top: 663px; }
  `;
  render() {
    return html`
      <browser-chrome></browser-chrome>
      <editor-header></editor-header>
      <div class="editor">
        <side-rail></side-rail>
        <div class="main">
          <div class="stage">
            <div class="context">
              <button aria-label="Delete">${icon(14, g.trash, 2)}</button><span class="rule"></span>
              <button>${icon(15, g.clock, 1.8)}5.0s</button><span class="rule"></span>
              <button class="color" aria-label="Background colour"></button><span class="rule"></span>
              <button>Animate</button><span class="rule"></span>
              <button>Position</button>
            </div>
            <lesson-slide class="slide"></lesson-slide>
          </div>
          <page-strip></page-strip>
          <editor-footer></editor-footer>
        </div>
      </div>
      <desktop-taskbar></desktop-taskbar>
      <button class="pen" aria-label="Annotate">${icon(13, svg`<path d="M4 17L16 4l4 4L9 19l-6 1zM12 21h9"/>`, 2.2)}</button>
      <svg class="cursor" width="9" height="14" viewBox="0 0 9 14"><path d="M1 1v10.500l2.500-2.300 1.700 3.800 1.700-.8-1.700-3.700h3z" fill="#fff" stroke="#333" stroke-width=".9"/></svg>
    `;
  }
}
